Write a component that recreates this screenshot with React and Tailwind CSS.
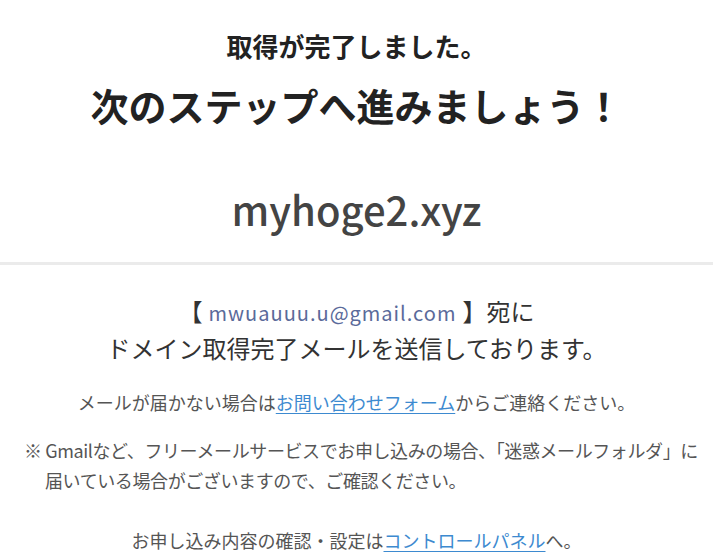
const jp = { fontFamily: '"Noto Sans CJK JP", "Noto Sans", sans-serif' };

const App = () => {
    return (
        <div className="min-h-screen bg-white text-[#333]" style={jp}>
            <section className="pt-[28px] pb-[28px] text-center border-b-[3px] border-[#ebebeb]">
                <p className="text-[26px] font-bold leading-[36px] text-[#222]">取得が完了しました。</p>
                <h1 className="mt-[16px] text-[38px] font-bold leading-[50px] text-[#222]">次のステップへ進みましょう！</h1>
                <p className="mt-[54px] text-[40px] font-medium leading-[50px] text-[#444]">myhoge2.xyz</p>
            </section>

            <section className="pt-[28px] text-center">
                <p className="text-[24px] leading-[35px] text-[#333]">
                    【
                    <span className="px-[6px] text-[20px] tracking-[1px] text-[#5a6a9a]">mwuauuu.u@gmail.com</span>
                    】宛に
                </p>
                <p className="text-[24px] leading-[35px] text-[#333]">ドメイン取得完了メールを送信しております。</p>

                <p className="mt-[22px] text-[18px] leading-[30px] text-[#555]">
                    メールが届かない場合は
                    <a href="#" className="text-[#3d8ad0] underline underline-offset-[3px]">お問い合わせフォーム</a>
                    からご連絡ください。
                </p>

                <p className="mt-[18px] pl-[45px] pr-0 -indent-[21px] text-left text-[18px] tracking-[-0.4px] leading-[30px] text-[#555]">
                    ※ Gmailなど、フリーメールサービスでお申し込みの場合、「迷惑メールフォルダ」に届いている場合がございますので、ご確認ください。
                </p>

                <p className="mt-[30px] text-[18px] leading-[30px] text-[#555]">
                    お申し込み内容の確認・設定は
                    <a href="#" className="text-[#3d8ad0] underline underline-offset-[3px]">コントロールパネル</a>
                    へ。
                </p>
            </section>
        </div>
    );
};

export default App;
